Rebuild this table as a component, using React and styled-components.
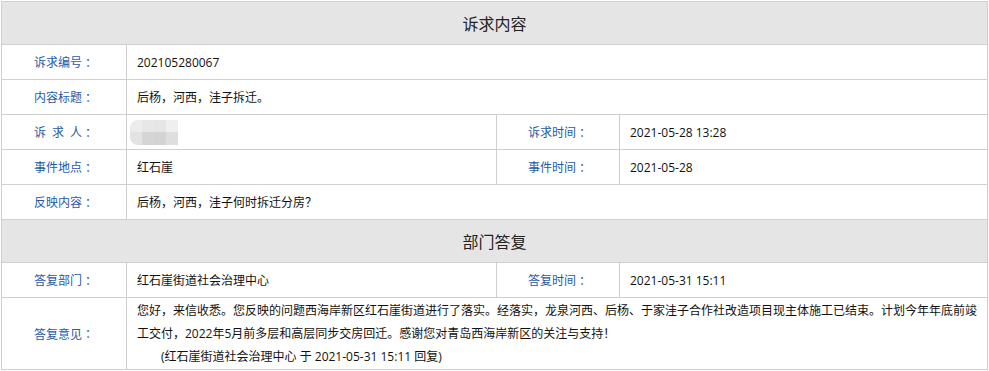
import React from 'react';
import styled, { createGlobalStyle } from 'styled-components';

const GlobalStyle = createGlobalStyle`
body {
  margin:0;
  background:#fff;
  font-family:"Open Sans","Noto Sans CJK SC",sans-serif;
}
`;

const Sheet = styled.div`
display:grid;
grid-template-columns:125px 370px 123px 1fr;
width:987px;
margin:1px 0 0 1px;
box-sizing:border-box;
border-left:1px solid #cfcfcf;
border-top:1px solid #cfcfcf;
`;

const SectionTitle = styled.div`
grid-column:1 / -1;
height:43px;
box-sizing:border-box;
display:flex;
align-items:center;
justify-content:center;
background:#e5e5e5;
border-right:1px solid #cfcfcf;
border-bottom:1px solid #cfcfcf;
font-size:16px;
color:#222;
`;

const Label = styled.div`
min-height:${props => props.tall ? '72px' : '35px'};
box-sizing:border-box;
display:flex;
align-items:center;
justify-content:center;
border-right:1px solid #cfcfcf;
border-bottom:1px solid #cfcfcf;
font-size:12px;
color:#1f5aa6;
white-space:pre;
`;

// centred full-width colon, as in the original page
const Colon = styled.span`
font-family:"Noto Sans CJK TC",sans-serif;
`;

const Value = styled.div`
grid-column:span ${props => props.span || 1};
min-height:35px;
box-sizing:border-box;
display:flex;
align-items:center;
padding:0 10px;
border-right:1px solid #cfcfcf;
border-bottom:1px solid #cfcfcf;
font-size:12px;
color:#111;
`;

const Reply = styled.div`
grid-column:span 3;
box-sizing:border-box;
padding:1px 10px;
border-right:1px solid #cfcfcf;
border-bottom:1px solid #cfcfcf;
font-size:12px;
line-height:23px;
color:#111;
`;

const Signature = styled.div`
padding-left:24px;
`;

const Mosaic = styled.div`
display:grid;
grid-template-columns:repeat(4, 12px);
grid-template-rows:12px 13px;
margin-left:-7px;
border-radius:8px 0 0 8px;
overflow:hidden;
filter:blur(0.6px);
`;

const Tile = styled.span`
background:${props => props.shade};
`;

const tiles = ['#ececec', '#e7e7e7', '#e5e5e5', '#efefef', '#e3e3e3', '#d5d5d5', '#d3d3d3', '#dedede'];

const Field = ({ children, tall }) => (
  <Label tall={tall}>{children}<Colon>：</Colon></Label>
);

const App = () => (
  <>
    <GlobalStyle />
    <Sheet>
      <SectionTitle>诉求内容</SectionTitle>

      <Field>诉求编号</Field>
      <Value span={3}>202105280067</Value>

      <Field>内容标题</Field>
      <Value span={3}>后杨，河西，洼子拆迁。</Value>

      <Field>{'诉\u2002求\u2002人'}</Field>
      <Value>
        <Mosaic>
          {tiles.map((t, i) => <Tile key={i} shade={t} />)}
        </Mosaic>
      </Value>
      <Field>诉求时间</Field>
      <Value>2021-05-28 13:28</Value>

      <Field>事件地点</Field>
      <Value>红石崖</Value>
      <Field>事件时间</Field>
      <Value>2021-05-28</Value>

      <Field>反映内容</Field>
      <Value span={3}>后杨，河西，洼子何时拆迁分房？</Value>

      <SectionTitle>部门答复</SectionTitle>

      <Field>答复部门</Field>
      <Value>红石崖街道社会治理中心</Value>
      <Field>答复时间</Field>
      <Value>2021-05-31 15:11</Value>

      <Field tall>答复意见</Field>
      <Reply>
        您好，来信收悉。您反映的问题西海岸新区红石崖街道进行了落实。经落实，龙泉河西、后杨、于家洼子合作社改造项目现主体施工已结束。计划今年年底前竣工交付，2022年5月前多层和高层同步交房回迁。感谢您对青岛西海岸新区的关注与支持！
        <Signature>(红石崖街道社会治理中心 于 2021-05-31 15:11 回复)</Signature>
      </Reply>
    </Sheet>
  </>
);

export default App;
